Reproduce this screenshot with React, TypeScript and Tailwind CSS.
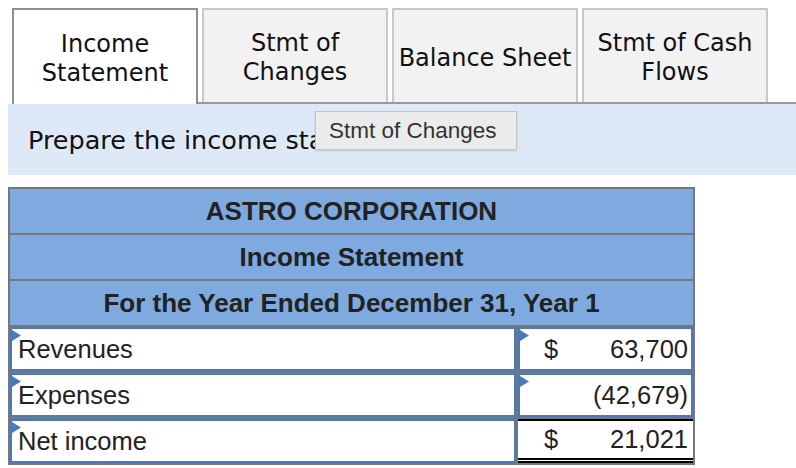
import React from 'react';

const tabs = [
    {id: 'income', label: ['Income', 'Statement']},
    {id: 'changes', label: ['Stmt of', 'Changes']},
    {id: 'balance', label: ['Balance Sheet']},
    {id: 'cash', label: ['Stmt of Cash', 'Flows']},
];

const headerRows = ['ASTRO CORPORATION', 'Income Statement', 'For the Year Ended December 31, Year 1'];

function Marker() {
    return (
        <svg className="absolute left-0 top-[1px]" width="10" height="11" viewBox="0 0 10 11">
            <path d="M0 0 L9 5.5 L0 11 Z" fill="#4a7ab9"/>
        </svg>
    );
}

function LabelCell({text}: { text: string }) {
    return (
        <div className="relative w-[506px] h-[44px] bg-white border-2 border-[#4a7ab9] flex items-center pl-[6px]">
            <Marker/>
            <span>{text}</span>
        </div>
    );
}

export default function App() {
    const activeTab = 'income';

    return (
        <div className="relative w-[796px] h-[468px] bg-white overflow-hidden text-[#111]"
             style={{fontFamily: '"DejaVu Sans", Verdana, sans-serif'}}>
            <div className="pt-[8px] pl-[12px]">
                <div className="flex gap-[4px] border-b-2 border-[#9a9a9a]">
                    {tabs.map(tab => (
                        tab.id === activeTab ? (
                            <div key={tab.id}
                                 className="relative z-10 -mb-[2px] w-[186px] h-[96px] pt-[3px] bg-white border-2 border-b-0 border-[#8e8e8e] flex flex-col items-center justify-center text-[24px] leading-[29px]">
                                {tab.label.map(l => <span key={l}>{l}</span>)}
                            </div>
                        ) : (
                            <div key={tab.id}
                                 className="w-[186px] h-[94px] pt-[4px] bg-[#f2f2f2] border-2 border-b-0 border-[#c8c8c8] flex flex-col items-center justify-center text-[24px] leading-[29px]">
                                {tab.label.map(l => <span key={l}>{l}</span>)}
                            </div>
                        )
                    ))}
                </div>
            </div>

            <div className="ml-[8px] h-[71px] bg-[#dde9f6] flex items-center pl-[20px] pt-[2px] text-[25.5px]">
                Prepare the income statement.
            </div>

            <div
                className="absolute left-[315px] top-[111px] w-[202px] h-[39px] bg-[#ebebeb] border border-[#c6c6c6] shadow-[0_1px_2px_rgba(0,0,0,0.15)] flex items-center pl-[13px] text-[22.5px] text-[#333]"
                style={{fontFamily: '"Liberation Sans", Arial, sans-serif'}}>
                Stmt of Changes
            </div>

            <div className="mt-[12px] ml-[8px] w-[687px] bg-[#777] p-[2px] flex flex-col gap-[2px] text-[25.5px] text-[#222]"
                 style={{fontFamily: '"Liberation Sans", Arial, sans-serif'}}>
                {headerRows.map(row => (
                    <div key={row} className="h-[44px] bg-[#7eaadf] flex items-center justify-center font-bold text-[26px]">
                        {row}
                    </div>
                ))}

                <div className="flex gap-[2px]">
                    <LabelCell text="Revenues"/>
                    <div className="relative flex-1 h-[44px] bg-white border-2 border-[#4a7ab9] flex items-center justify-between pl-[24px] pr-[3px]">
                        <Marker/>
                        <span>$</span>
                        <span>63,700</span>
                    </div>
                </div>

                <div className="flex gap-[2px]">
                    <LabelCell text="Expenses"/>
                    <div className="relative flex-1 h-[44px] bg-white border-2 border-[#4a7ab9] flex items-center justify-end pr-[3px]">
                        <Marker/>
                        <span>(42,679)</span>
                    </div>
                </div>

                <div className="flex gap-[2px]">
                    <LabelCell text="Net income"/>
                    <div className="flex-1 h-[44px] bg-white border-t-2 border-t-black border-b-[5px] border-b-black border-double flex items-center justify-between pl-[26px] pr-[5px]">
                        <span>$</span>
                        <span>21,021</span>
                    </div>
                </div>
            </div>
        </div>
    );
}
